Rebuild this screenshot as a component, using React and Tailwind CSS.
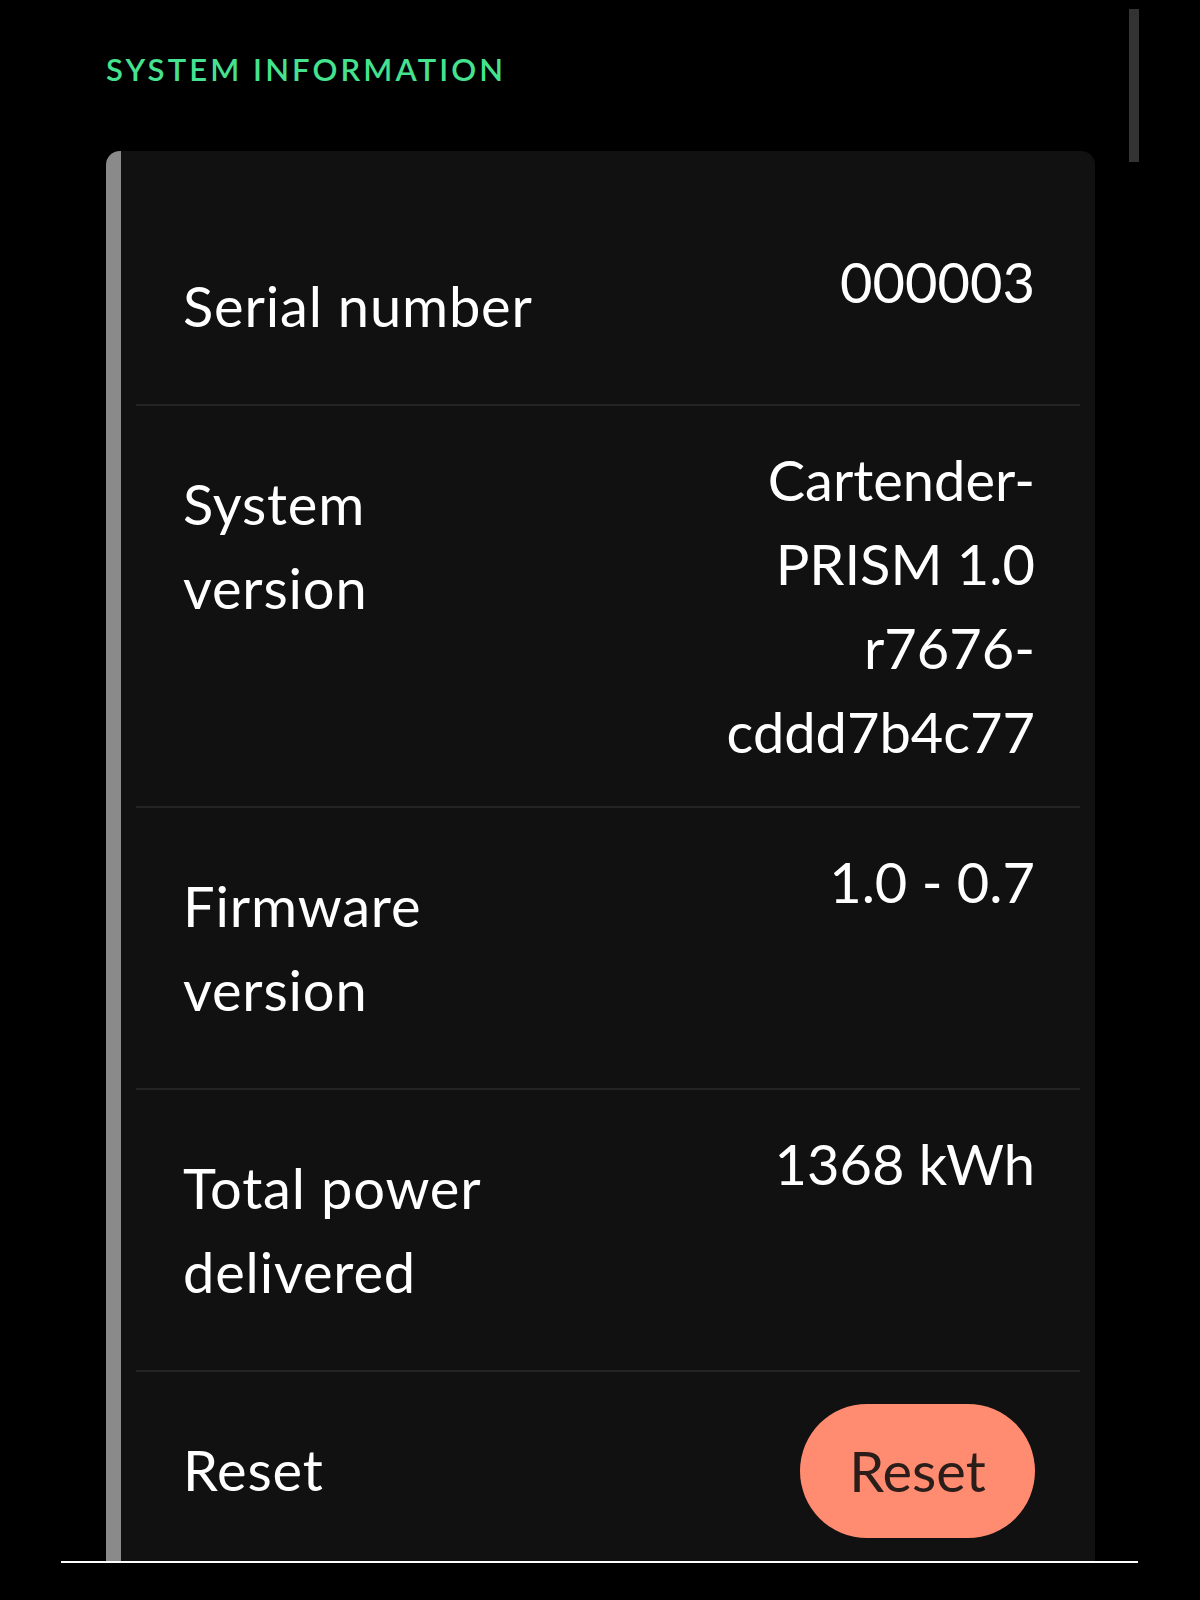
import React from 'react';

const rows = [
  { label: 'Serial number', value: '000003' },
  { label: 'System version', value: 'Cartender-PRISM 1.0 r7676-cddd7b4c77' },
  { label: 'Firmware version', value: '1.0 - 0.7' },
  { label: 'Total power delivered', value: '1368 kWh' },
];

const font = { fontFamily: 'Lato, "Noto Sans", sans-serif' };

const InfoRow = ({ label, children, last }) => (
  <div className={last ? '' : 'border-b-2 border-[#232323]'}>
    <div className="flex items-start justify-between py-8 pl-[47px] pr-[45px]">
      <div className="my-6 w-[362px] text-[56px] leading-[84px] tracking-[0.015em] text-white">{label}</div>
      {children}
    </div>
  </div>
);

export default function App() {
  return (
    <div className="relative h-[1600px] w-[1200px] bg-black" style={font}>
      <div className="h-[1561px] overflow-hidden pl-[106px] pr-[105px] pt-[54px]">
        {/* section title */}
        <h2 className="text-[31px] font-semibold uppercase leading-[31px] tracking-[0.1em] text-[#45e28f]">
          System information
        </h2>

        <div className="mt-[66px] rounded-[14px] border-l-[15px] border-[#8a8a8a] bg-[#111111] pt-[57px] pb-8">
          <div className="mx-[15px]">
            {rows.map((row) => (
              <InfoRow key={row.label} label={row.label}>
                <div className="w-[400px] text-right text-[56px] leading-[84px] text-white">{row.value}</div>
              </InfoRow>
            ))}
            <InfoRow label="Reset" last>
              <button className="h-[134px] w-[235px] rounded-full bg-[#ff8c70] text-[56px] text-[#2b1d1a]">
                Reset
              </button>
            </InfoRow>
          </div>
        </div>
      </div>

      <div className="ml-[61px] h-[2px] w-[1077px] bg-white" />

      {/* scrollbar thumb */}
      <div className="absolute left-[1129px] top-[9px] h-[153px] w-[10px] bg-[#333333]" />
    </div>
  );
}
